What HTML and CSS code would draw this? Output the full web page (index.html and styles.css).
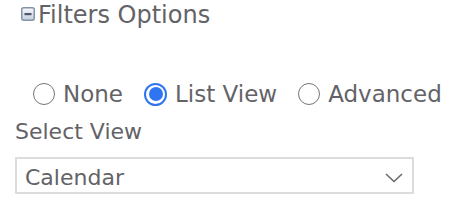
FILE: index.html
```html
<!DOCTYPE html>
<html>
<head>
<meta charset="utf-8">
<link rel="stylesheet" href="styles.css">
</head>
<body>
<div class="panel">
  <div class="heading">
    <svg class="toggle" width="14" height="14" viewBox="0 0 14 14">
      <defs>
        <linearGradient id="g" x1="0" y1="0" x2="0" y2="1">
          <stop offset="0" stop-color="#f7f9fc"/>
          <stop offset="1" stop-color="#c3cedd"/>
        </linearGradient>
      </defs>
      <rect x="0.75" y="0.75" width="12.5" height="12.5" rx="2" fill="url(#g)" stroke="#8593a8" stroke-width="1.5"/>
      <rect x="3.5" y="6" width="7" height="2.2" fill="#4d5868"/>
    </svg>
    <span class="heading-text">Filters Options</span>
  </div>
  <div class="radios">
    <label class="radio"><span class="dot"></span><span>None</span></label>
    <label class="radio"><span class="dot on"></span><span>List View</span></label>
    <label class="radio"><span class="dot"></span><span>Advanced</span></label>
  </div>
  <div class="field-label">Select View</div>
  <div class="select">
    <span>Calendar</span>
    <svg class="chev" width="18" height="10" viewBox="0 0 18 10">
      <path d="M1 1 L9 8.5 L17 1" fill="none" stroke="#6a6a6a" stroke-width="1.6"/>
    </svg>
  </div>
</div>
</body>
</html>
```
FILE: styles.css
```css
html, body { margin: 0; background: #fff; }
body { font-family: "DejaVu Sans", Verdana, sans-serif; color: #636367; }
.panel { padding: 1px 0 0 15px; }
.heading { display: flex; align-items: center; gap: 3px; padding-left: 6px; height: 28px; }
.toggle { display: block; margin-top: -2px; flex-shrink: 0; }
.heading-text { font-size: 24px; line-height: 28px; white-space: nowrap; }
.radios { display: flex; align-items: center; gap: 21px; margin-top: 52px; padding-left: 18px; height: 26px; font-size: 23px; line-height: 26px; white-space: nowrap; }
.radio { display: flex; align-items: center; gap: 8px; flex-shrink: 0; }
.dot { flex-shrink: 0; width: 20px; height: 20px; border: 1.5px solid #76767a; border-radius: 50%; box-sizing: content-box; position: relative; }
.dot.on { border: 2.5px solid #2f74f0; width: 19px; height: 19px; }
.dot.on::after { content: ""; position: absolute; left: 2.5px; top: 2.5px; width: 14px; height: 14px; border-radius: 50%; background: #2f74f0; }
.field-label { margin-top: 12px; font-size: 22px; line-height: 26px; }
.select { width: 379px; margin-top: 12px; border: 2px solid #dcdcdc; height: 26px; padding: 6px 8px 1px 8px; display: flex; align-items: flex-start; justify-content: space-between; font-size: 22px; line-height: 26px; }
.chev { margin: 8px 1px 0 0; }
```
